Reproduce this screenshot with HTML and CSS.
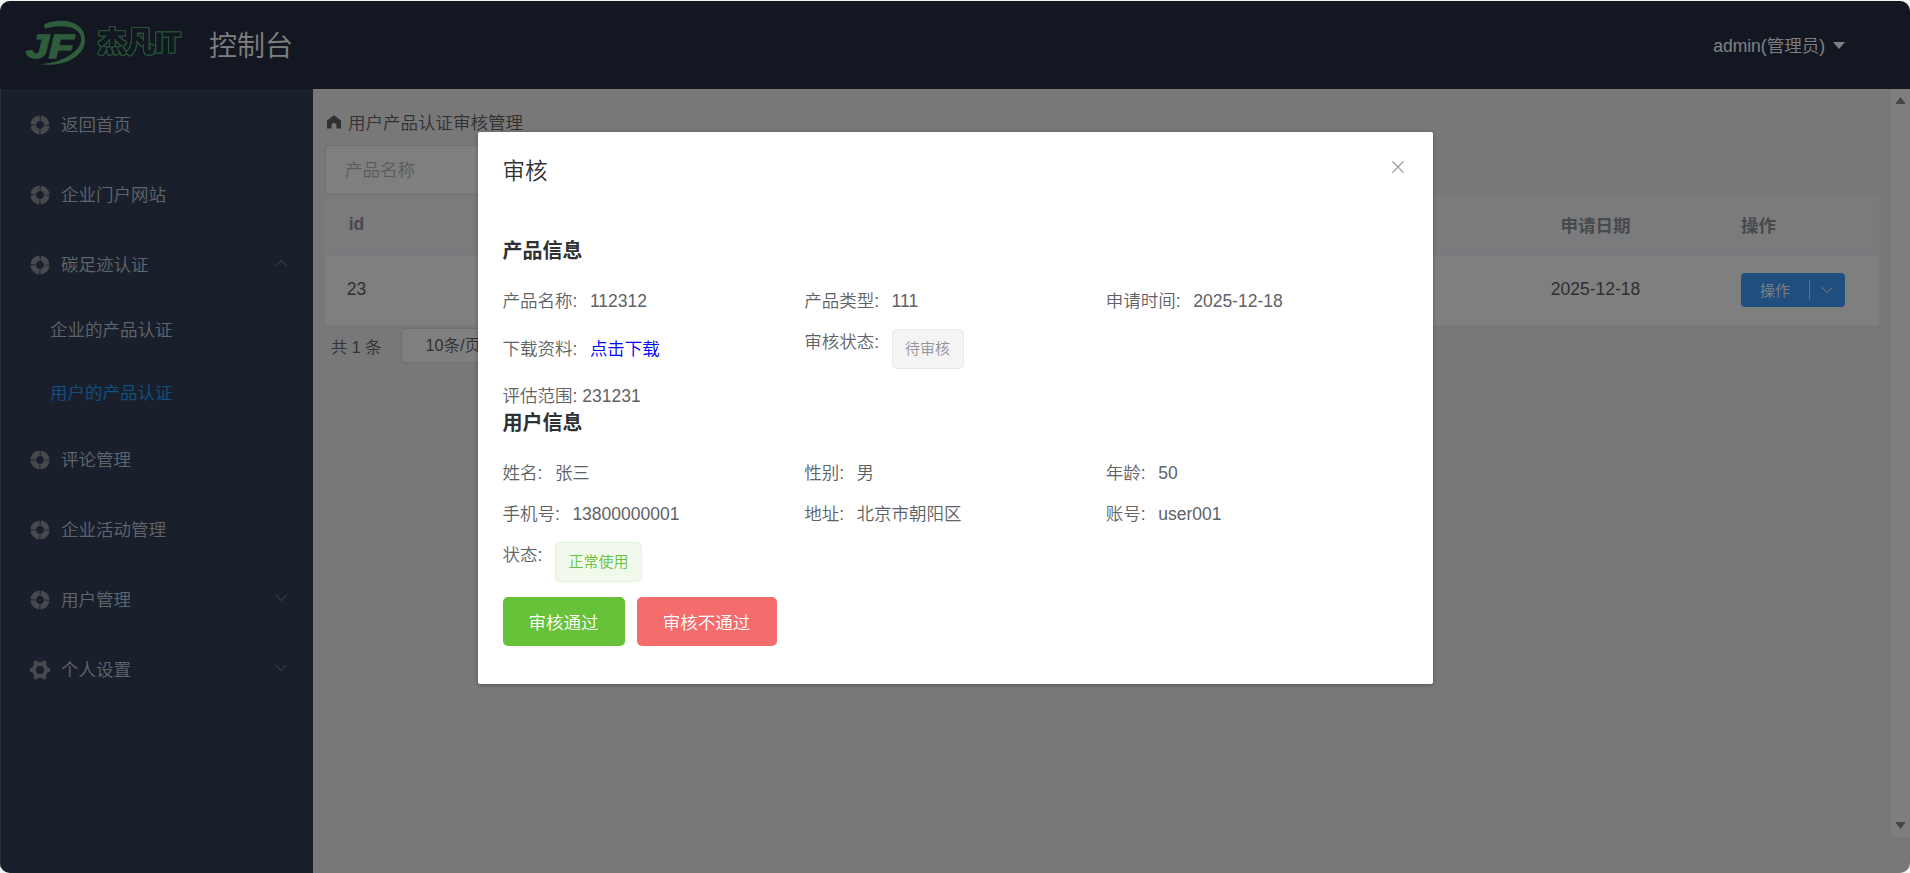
FILE: index.html
```html
<!DOCTYPE html>
<html lang="zh">
<head>
  <meta charset="UTF-8">
  <meta name="viewport" content="width=device-width, initial-scale=1.0">
  <title>控制台</title>
  <link rel="stylesheet" href="styles.css">
</head>
<body>

<svg class="symbols" aria-hidden="true">
  <symbol id="icon-help" viewBox="0 0 20 20">
    <circle cx="10" cy="10" r="6.700" fill="none" stroke="currentColor" stroke-width="5.600" stroke-dasharray="9.500 1.024" stroke-dashoffset="-.512"/>
  </symbol>
  <symbol id="icon-setting" viewBox="0 0 20 20">
    <circle cx="10" cy="10" r="6" fill="none" stroke="currentColor" stroke-width="4"/>
    <path stroke="currentColor" stroke-width="4.200" d="M-.3 10h3M17.300 10h3M4.900 1.100l1.400 2.600M15.100 1.100l-1.400 2.600M4.900 18.900l1.400-2.600M15.100 18.900l-1.400-2.600"/>
  </symbol>
  <symbol id="icon-down" viewBox="0 0 12 8">
    <path fill="none" stroke="currentColor" d="M.7 1.200 6 6.500l5.300-5.300"/>
  </symbol>
</svg>

<div class="app">
  <header class="header">
    <svg class="logo" viewBox="0 0 62 50">
      <path d="M20 6C36-1 61 3 60 23c-1 16-22 27-46 23 18 0 40-10 42-23C58 10 40 5 21 10.500c-2 0-2.500-3.500-1-4.500z"/>
      <text x="1" y="40" textLength="48" lengthAdjust="spacingAndGlyphs">JF</text>
    </svg>
    <span class="brand">杰凡IT</span>
    <span class="title">控制台</span>
    <div class="user">admin(管理员)<i class="caret"></i></div>
  </header>

  <div class="container">
    <ul class="menu">
      <li class="item"><svg class="icon"><use href="#icon-help"/></svg>返回首页</li>
      <li class="item"><svg class="icon"><use href="#icon-help"/></svg>企业门户网站</li>
      <li class="item"><svg class="icon"><use href="#icon-help"/></svg>碳足迹认证<svg class="arrow up"><use href="#icon-down"/></svg></li>
      <li class="sub-item">企业的产品认证</li>
      <li class="sub-item active">用户的产品认证</li>
      <li class="item"><svg class="icon"><use href="#icon-help"/></svg>评论管理</li>
      <li class="item"><svg class="icon"><use href="#icon-help"/></svg>企业活动管理</li>
      <li class="item"><svg class="icon"><use href="#icon-help"/></svg>用户管理<svg class="arrow"><use href="#icon-down"/></svg></li>
      <li class="item"><svg class="icon"><use href="#icon-setting"/></svg>个人设置<svg class="arrow"><use href="#icon-down"/></svg></li>
    </ul>

    <main class="main">
      <div class="breadcrumb">
        <svg viewBox="0 0 14 14"><path fill="currentColor" d="M7 .2 14 5.500V13.500H9.500V10.500a2.500 2.500 0 0 0-5 0V13.500H0V5.500z"/></svg>
        用户产品认证审核管理
      </div>
      <input class="search" type="text" placeholder="产品名称">
      <table class="table">
        <colgroup><col class="col-id"><col><col class="col-date"><col class="col-action"></colgroup>
        <tr><th>id</th><th></th><th>申请日期</th><th class="left">操作</th></tr>
        <tr>
          <td>23</td>
          <td></td>
          <td>2025-12-18</td>
          <td class="left">
            <div class="dropdown"><span>操作</span><svg><use href="#icon-down"/></svg></div>
          </td>
        </tr>
      </table>
      <div class="pagination">
        <span>共 1 条</span>
        <span class="page-size">10条/页</span>
      </div>
    </main>

    <div class="scrollbar">
      <svg viewBox="0 0 9 7"><path d="M4.500 0 9 6v1H0V6z"/></svg>
      <svg class="down" viewBox="0 0 9 7"><path d="M4.500 0 9 6v1H0V6z"/></svg>
    </div>
  </div>

  <div class="mask">
    <div class="dialog">
      <div class="dialog-header">
        <span>审核</span>
        <svg class="close" viewBox="0 0 12 12"><path d="M.4.4l11.200 11.200M11.600.4.4 11.600"/></svg>
      </div>

      <h3>产品信息</h3>
      <table class="info">
        <tr>
          <td><label>产品名称:</label>112312</td>
          <td><label>产品类型:</label>111</td>
          <td><label>申请时间:</label>2025-12-18</td>
        </tr>
        <tr>
          <td><label>下载资料:</label><a href="#">点击下载</a></td>
          <td><div class="cell"><label>审核状态:</label><span class="tag">待审核</span></div></td>
          <td></td>
        </tr>
      </table>
      <div class="scope">评估范围: 231231</div>

      <h3>用户信息</h3>
      <table class="info">
        <tr>
          <td><label>姓名:</label>张三</td>
          <td><label>性别:</label>男</td>
          <td><label>年龄:</label>50</td>
        </tr>
        <tr>
          <td><label>手机号:</label>13800000001</td>
          <td><label>地址:</label>北京市朝阳区</td>
          <td><label>账号:</label>user001</td>
        </tr>
        <tr>
          <td><div class="cell"><label>状态:</label><span class="tag success">正常使用</span></div></td>
          <td></td>
          <td></td>
        </tr>
      </table>
      <div class="buttons">
        <button class="btn pass">审核通过</button>
        <button class="btn reject">审核不通过</button>
      </div>
    </div>
  </div>
</div>

</body>
</html>
```
FILE: styles.css
```css
* {
  box-sizing: border-box;
}
body {
  margin: 0;
  height: 873px;
  overflow: hidden;
  background: #f2f4f2;
  font-family: "Liberation Sans", "Noto Sans CJK SC", sans-serif;
  font-size: 17.5px;
  font-weight: 350;
  color: #606266;
}
.symbols {
  position: absolute;
  width: 0;
  height: 0;
}
.app {
  position: relative;
  height: 872px;
  margin-top: 1px;
  border-radius: 10px;
  overflow: hidden;
}

/* 顶部 */
.header {
  display: flex;
  align-items: center;
  height: 88px;
  padding-left: 25px;
  background: #242f42;
  color: #fff;
}
.logo {
  width: 62px;
  height: 50px;
  margin-bottom: 4px;
  fill: #5eb878;
}
.logo text {
  font: italic bold 34px "Liberation Sans", sans-serif;
  stroke: #5eb878;
  stroke-width: 1.5px;
  stroke-linejoin: round;
}
.brand {
  width: 90px;
  margin: 0 0 6px 11px;
  font-size: 28.5px;
  font-weight: bold;
  line-height: 40px;
  white-space: nowrap;
  color: #242f42;
  -webkit-text-stroke: 1px #242f42;
  filter: drop-shadow(1px 0 0 #4fa568) drop-shadow(-1px 0 0 #4fa568) drop-shadow(0 1px 0 #4fa568) drop-shadow(0 -1px 0 #4fa568);
}
.title {
  margin: 0 0 3px 21px;
  font-size: 28px;
}
.user {
  display: flex;
  align-items: center;
  margin: 0 65px 1px auto;
}
.caret {
  margin: 1px 0 0 8px;
  border: 6px solid transparent;
  border-top: 7px solid #fff;
  border-bottom: 0;
}

.container {
  display: flex;
  height: 784px;
}

/* 侧边菜单 */
.menu {
  width: 313px;
  margin: 0;
  padding: 0;
  list-style: none;
  border-left: 1px solid #56616e;
  background: #324157;
  color: #bfcbd9;
}
.item {
  display: flex;
  align-items: center;
  height: 70px;
  padding: 0 26px 1px 29px;
}
.icon {
  width: 20px;
  height: 20px;
  margin: 2px 11px 0 0;
  overflow: visible;
  color: #909399;
}
.arrow {
  width: 12px;
  height: 8px;
  margin: 0 0 2px auto;
  color: #909399;
}
.arrow.up {
  transform: rotate(180deg);
}
.sub-item {
  height: 62.5px;
  padding-left: 49px;
  line-height: 62px;
}
.sub-item.active {
  color: #20a0ff;
}

/* 内容区 */
.main {
  flex: 1;
  padding: 18px 12px 0;
  background: #f0f0f0;
}
.breadcrumb {
  display: flex;
  align-items: center;
  gap: 7px;
  height: 28px;
  padding-left: 2px;
}
.breadcrumb svg {
  width: 14px;
  height: 14px;
  margin-top: 2px;
}
.search {
  display: block;
  width: 300px;
  height: 50px;
  margin-top: 10px;
  padding: 0 19px;
  font: inherit;
  border: 1px solid #dcdfe6;
  border-radius: 5px;
  background: #fff;
}
.search::placeholder {
  color: #b4b8c0;
}
.table {
  width: 1554px;
  table-layout: fixed;
  border-collapse: collapse;
  background: #fff;
}
.col-id {
  width: 63px;
}
.col-date {
  width: 265px;
}
.col-action {
  width: 151px;
}
.table th,
.table td {
  padding: 0;
  text-align: center;
}
.table .left {
  padding-left: 13px;
  text-align: left;
}
.table th {
  height: 60px;
  padding-bottom: 1px;
  background: #f5f7fa;
  border-bottom: 1px solid #ebeef5;
  color: #909399;
}
.table td {
  height: 70px;
  padding-bottom: 1px;
}
.dropdown {
  display: flex;
  align-items: center;
  width: 104px;
  height: 34px;
  margin-top: 1px;
  padding: 0 0 1px 19px;
  border-radius: 4px;
  background: #409eff;
  color: #fff;
  font-size: 15px;
}
.dropdown span {
  width: 49px;
}
.dropdown svg {
  box-sizing: content-box;
  width: 12px;
  height: 8px;
  padding: 6px 0 6px 11px;
  border-left: 1px solid #c6e2ff;
}
.pagination {
  display: flex;
  align-items: center;
  gap: 19px;
  margin-top: 3px;
  padding-left: 6px;
  font-size: 16.25px;
}
.page-size {
  width: 138px;
  height: 35px;
  padding-left: 24px;
  border: 1px solid #dcdfe6;
  border-radius: 4px;
  background: #fff;
  line-height: 32px;
}
.scrollbar {
  display: flex;
  flex-direction: column;
  justify-content: space-between;
  align-items: center;
  width: 19px;
  height: 748px;
  padding: 8px 0;
  background: #fcfcfc;
  box-shadow: 0 40px 0 #f0f0f0;
}
.scrollbar svg {
  width: 9px;
  height: 7px;
  fill: #8b8b8b;
}
.scrollbar .down {
  transform: rotate(180deg);
}

/* 审核弹窗 */
.mask {
  position: absolute;
  inset: 0;
  padding-top: 131px;
  background: rgba(0, 0, 0, 0.5);
}
.dialog {
  width: 955px;
  height: 552px;
  margin: 0 auto;
  padding: 0 25px;
  border-radius: 2px;
  background: #fff;
  box-shadow: 0 1px 4px rgba(0, 0, 0, 0.3);
}
.dialog-header {
  display: flex;
  justify-content: space-between;
  height: 106px;
  padding: 24px 4px 0 0;
  font-size: 22.5px;
  line-height: 32px;
  color: #303133;
}
.close {
  width: 12px;
  height: 12px;
  margin-top: 5px;
  stroke: #909399;
  stroke-width: 1.2;
}
h3 {
  height: 26px;
  margin: 0 0 24px;
  font-size: 20px;
  line-height: 27px;
  color: #303133;
}
.info {
  width: 905px;
  table-layout: fixed;
  border-collapse: collapse;
  line-height: 26px;
}
.info td {
  padding: 0 0 15px;
}
.info label {
  margin-right: 12.5px;
}
.info a {
  color: #00f;
  text-decoration: none;
}
.cell {
  display: flex;
}
.tag {
  height: 40px;
  padding: 0 12.5px;
  border: 1px solid #e9e9eb;
  border-radius: 5px;
  background: #f4f4f5;
  color: #909399;
  font-size: 15px;
  line-height: 38px;
}
.tag.success {
  border-color: #e1f3d8;
  background: #f0f9eb;
  color: #67c23a;
}
.scope {
  height: 26px;
  line-height: 25px;
}
.buttons {
  display: flex;
  gap: 12px;
}
.btn {
  height: 49px;
  width: 122px;
  padding: 0 0 1px;
  border: none;
  border-radius: 5px;
  font: inherit;
  color: #fff;
}
.pass {
  background: #67c23a;
}
.reject {
  width: 140px;
  background: #f56c6c;
}
```
